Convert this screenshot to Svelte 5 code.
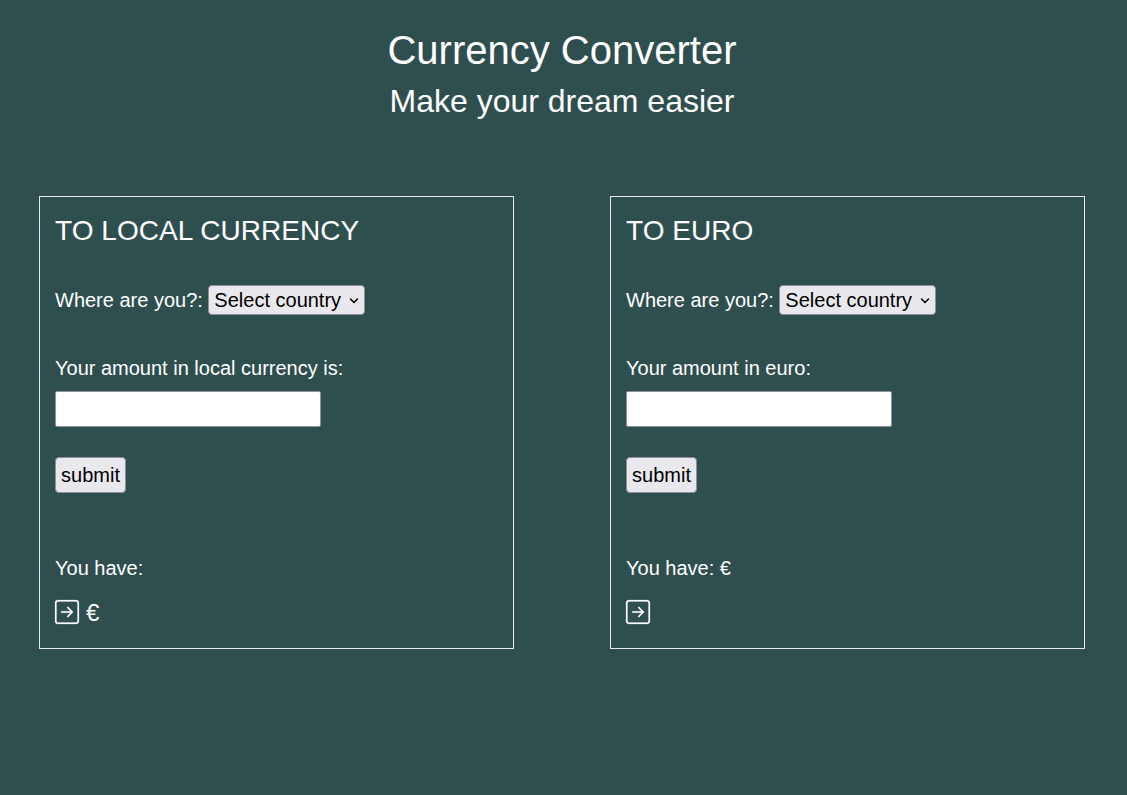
<script>
  const cards = [
    { id: 'local', title: 'TO LOCAL CURRENCY', label: 'Your amount in local currency is:', have: 'You have:', result: '€' },
    { id: 'euro', title: 'TO EURO', label: 'Your amount in euro:', have: 'You have: €', result: '' }
  ];
</script>

<main>
  <header>
    <h1>Currency Converter</h1>
    <h2>Make your dream easier</h2>
  </header>
  <div class="cards">
    {#each cards as card}
      <section class="card">
        <h3>{card.title}</h3>
        <div class="country">
          <label for="country-{card.id}">Where are you?:</label>
          <div class="select">
            <select id="country-{card.id}"><option>Select country</option></select>
            <svg class="chevron" width="10" height="8" viewBox="0 0 10 8" fill="none" stroke="#000" stroke-width="1.5" stroke-linecap="round" stroke-linejoin="round" aria-hidden="true">
              <path d="M1.500 2 5 5.500 8.500 2" />
            </svg>
          </div>
        </div>
        <label class="amount" for="amount-{card.id}">{card.label}</label>
        <input id="amount-{card.id}" type="text" />
        <button type="button">submit</button>
        <p class="have">{card.have}</p>
        <div class="result">
          <svg width="24" height="24" viewBox="0 0 16 16" fill="currentColor" aria-hidden="true">
            <path fill-rule="evenodd" d="M15 2a1 1 0 0 0-1-1H2a1 1 0 0 0-1 1v12a1 1 0 0 0 1 1h12a1 1 0 0 0 1-1V2zM0 2a2 2 0 0 1 2-2h12a2 2 0 0 1 2 2v12a2 2 0 0 1-2 2H2a2 2 0 0 1-2-2V2zm4.500 5.500a.5.5 0 0 0 0 1h5.793l-2.147 2.146a.5.5 0 0 0 .708.708l3-3a.5.5 0 0 0 0-.708l-3-3a.5.5 0 1 0-.708.708L10.293 7.500H4.500z" />
          </svg>
          <span>{card.result}</span>
        </div>
      </section>
    {/each}
  </div>
</main>

<style>
  :global(body) { background: #2f4f4f; }
  main {
    box-sizing: border-box;
    min-height: 795px;
    padding: 26px 42px 0 39px;
    color: #fff;
    font-family: "Liberation Sans", Arial, sans-serif;
    font-size: 20px;
    line-height: 30px;
  }
  header { text-align: center; }
  h1, h2, h3, p { margin: 0; font-weight: 400; }
  h1 { font-size: 40px; line-height: 48px; }
  h2 { font-size: 32px; line-height: 38px; margin-top: 8px; }
  .cards { display: flex; justify-content: space-between; margin-top: 76px; }
  .card {
    box-sizing: border-box;
    width: 475px;
    height: 453px;
    border: 1px solid #e9e9ed;
    padding: 17px 15px 15px;
    display: flex;
    flex-direction: column;
    align-items: flex-start;
  }
  h3 { font-size: 28px; line-height: 34px; letter-spacing: 0.05px; }
  .country { display: flex; align-items: center; gap: 5px; height: 30px; margin-top: 37px; }
  select, input, button { box-sizing: border-box; margin: 0; border: 1px solid #8f8f9d; font: inherit; color: #000; }
  .select { position: relative; display: flex; }
  select { appearance: none; width: 157px; height: 30px; padding: 0 5px 0 5.500px; border-radius: 4px; background: #e9e9ed; line-height: normal; }
  .chevron { position: absolute; right: 6px; top: 12px; pointer-events: none; }
  .amount { margin-top: 38px; }
  input { width: 266px; height: 36px; margin-top: 8px; border-radius: 2px; background: #fff; }
  button { width: 71px; height: 36px; margin-top: 30px; padding: 0; border-radius: 4px; background: #e9e9ed; }
  .have { margin-top: 60px; }
  .result { display: flex; align-items: center; gap: 7px; height: 36px; margin-top: 11px; font-size: 24px; line-height: 36px; }
  .result svg { stroke: currentColor; stroke-width: 0.15; overflow: visible; }
  .result span { padding-top: 2px; }
</style>
